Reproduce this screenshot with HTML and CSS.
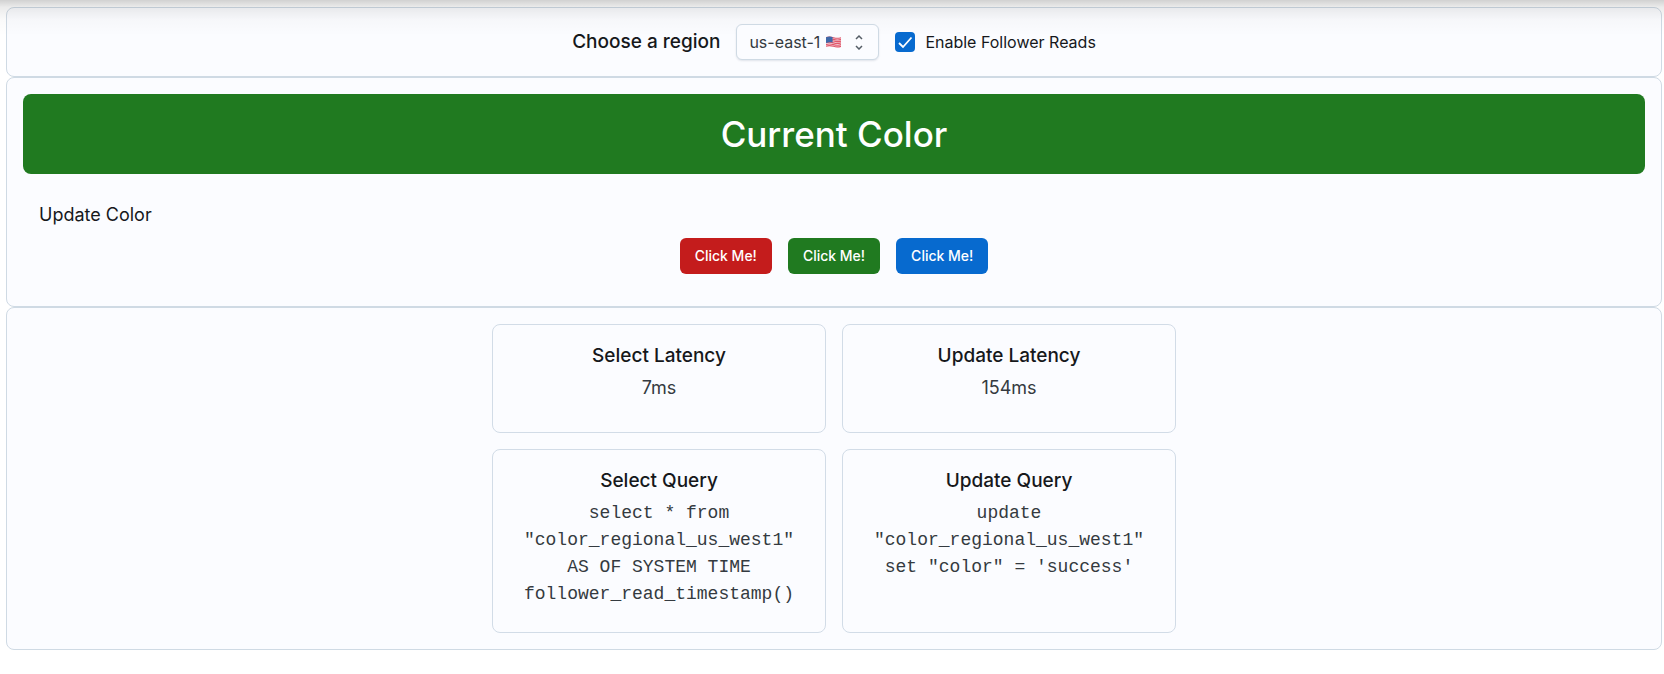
FILE: index.html
```html
<!DOCTYPE html>
<html lang="en">
<head>
<meta charset="utf-8">
<meta name="viewport" content="width=device-width, initial-scale=1">
<title>Region color demo</title>
<link rel="stylesheet" href="styles.css">
</head>
<body>
<main class="page">
  <section class="panel toolbar">
    <label class="heading" for="region">Choose a region</label>
    <div class="select">
      <select id="region" class="select-input">
        <option>us-east-1</option>
        <option>us-west-1</option>
      </select>
      <svg class="flag" viewBox="0 0 16 12" aria-hidden="true">
        <path fill="#f3e9ec" d="M0 1C3-.5 5 0 8 1s5 1 8 0v10c-3 1-5 1-8 0s-5-1-8 0z"/>
        <path fill="none" stroke="#e2566a" stroke-width="1.2" d="M0 1.4C3 0 5 .5 8 1.4s5 1 8 0M0 3.2c3-1.4 5-.9 8 0s5 1 8 0M0 5c3-1.4 5-.9 8 0s5 1 8 0M0 6.9c3-1.4 5-.9 8 0s5 1 8 0M0 8.8c3-1.4 5-.9 8 0s5 1 8 0M0 10.6c3-1.4 5-.9 8 0s5 1 8 0"/>
        <path fill="#3f68a8" d="M0 1C3-.4 5 0 7 .6V6.500C5 6 3 6 0 7z"/>
      </svg>
      <svg class="chevrons" viewBox="0 0 16 16" aria-hidden="true">
        <path d="M5 5l3-3 3 3M5 12l3 3 3-3"/>
      </svg>
    </div>
    <label class="check">
      <span class="check-box">
        <input class="check-input" type="checkbox" checked>
        <svg class="tick" viewBox="0 0 20 20" aria-hidden="true"><path d="M4 11l4 4L16.500 5.500"/></svg>
      </span>
      Enable Follower Reads
    </label>
  </section>

  <section class="panel">
    <h1 class="banner">Current Color</h1>
    <div class="update">
      <h2 class="update-title">Update Color</h2>
      <div class="buttons">
        <button class="button red" type="button">Click Me!</button>
        <button class="button green" type="button">Click Me!</button>
        <button class="button blue" type="button">Click Me!</button>
      </div>
    </div>
  </section>

  <section class="panel stats">
    <article class="card">
      <h2 class="heading">Select Latency</h2>
      <p class="value">7ms</p>
    </article>
    <article class="card">
      <h2 class="heading">Update Latency</h2>
      <p class="value">154ms</p>
    </article>
    <article class="card">
      <h2 class="heading">Select Query</h2>
      <p class="value code">select * from "color_regional_us_west1" AS OF SYSTEM TIME follower_read_timestamp()</p>
    </article>
    <article class="card">
      <h2 class="heading">Update Query</h2>
      <p class="value code">update "color_regional_us_west1" set "color" = 'success'</p>
    </article>
  </section>
</main>
</body>
</html>
```
FILE: styles.css
```css
* { box-sizing: border-box; }

body {
  margin: 0;
  background: #fff;
  color: #16181b;
  font-family: Inter, "Liberation Sans", sans-serif;
  font-size: 16px;
  line-height: 24px;
}

h1, h2, p { margin: 0; }

.page {
  position: relative;
  padding: 7px 2px 24px 6px;
}

.page::before {
  content: "";
  position: absolute;
  inset: 0 0 auto;
  height: 36px;
  background: linear-gradient(rgba(0, 0, 0, .18), rgba(0, 0, 0, .08) 7px, rgba(0, 0, 0, .02) 20px, transparent);
  pointer-events: none;
}

.panel {
  padding: 16px;
  border: 1px solid #cfdae4;
  border-radius: 8px;
  background: #fbfcff;
}

.toolbar {
  display: flex;
  align-items: center;
  justify-content: center;
  gap: 16px;
}

.heading {
  font-size: 19px;
  line-height: 28px;
  font-weight: 500;
}

.select { position: relative; }

.select-input {
  appearance: none;
  display: block;
  width: 143px;
  height: 36px;
  padding: 0 12px;
  border: 1px solid #cfdae4;
  border-radius: 6px;
  background: #fbfcff;
  box-shadow: 0 1px 2px rgba(30, 50, 80, .12);
  color: #343a40;
  font: inherit;
}

.flag {
  position: absolute;
  top: 12px;
  right: 38px;
  width: 15px;
  height: 12px;
}

.chevrons {
  position: absolute;
  top: 10px;
  right: 12px;
  width: 16px;
  height: 16px;
}

.chevrons path {
  fill: none;
  stroke: #555d66;
  stroke-width: 1.5;
}

.flag, .chevrons, .tick { pointer-events: none; }

.check {
  display: flex;
  align-items: center;
  gap: 10px;
}

.check-box { display: grid; }

.check-input {
  appearance: none;
  grid-area: 1 / 1;
  width: 20px;
  height: 20px;
  margin: 0;
  border-radius: 4px;
  background: #fff;
  box-shadow: inset 0 0 0 1px #cfdae4;
}

.check-input:checked {
  background: #076acf;
  box-shadow: none;
}

.tick {
  grid-area: 1 / 1;
  width: 20px;
  height: 20px;
}

.tick path {
  fill: none;
  stroke: #fff;
  stroke-width: 1.8;
}

.banner {
  padding: 16px;
  border-radius: 8px;
  background: #207a20;
  color: #fff;
  font-size: 35px;
  line-height: 48px;
  font-weight: 500;
  text-align: center;
}

.update { padding: 29px 16px 16px; }

.update-title {
  font-size: 18px;
  line-height: 24px;
  font-weight: 400;
}

.buttons {
  display: flex;
  justify-content: center;
  gap: 16px;
  margin-top: 11px;
}

.button {
  height: 36px;
  padding: 0 15px;
  border: 0;
  border-radius: 6px;
  color: #fff;
  font: inherit;
  font-size: 14px;
  font-weight: 500;
}

.red { background: #c41c1c; }
.green { background: #207a20; }
.blue { background: #076acf; }

.stats {
  display: grid;
  grid-template-columns: repeat(2, minmax(0, 334px));
  justify-content: center;
  gap: 16px;
}

.card {
  min-height: 109px;
  padding: 17px 24px 24px;
  border: 1px solid #d2dce7;
  border-radius: 8px;
  text-align: center;
}

.value {
  margin-top: 4px;
  color: #343a40;
  font-size: 18px;
  line-height: 27px;
}

.code {
  margin-top: 5px;
  font-family: "Liberation Mono", "Courier New", monospace;
}
```
